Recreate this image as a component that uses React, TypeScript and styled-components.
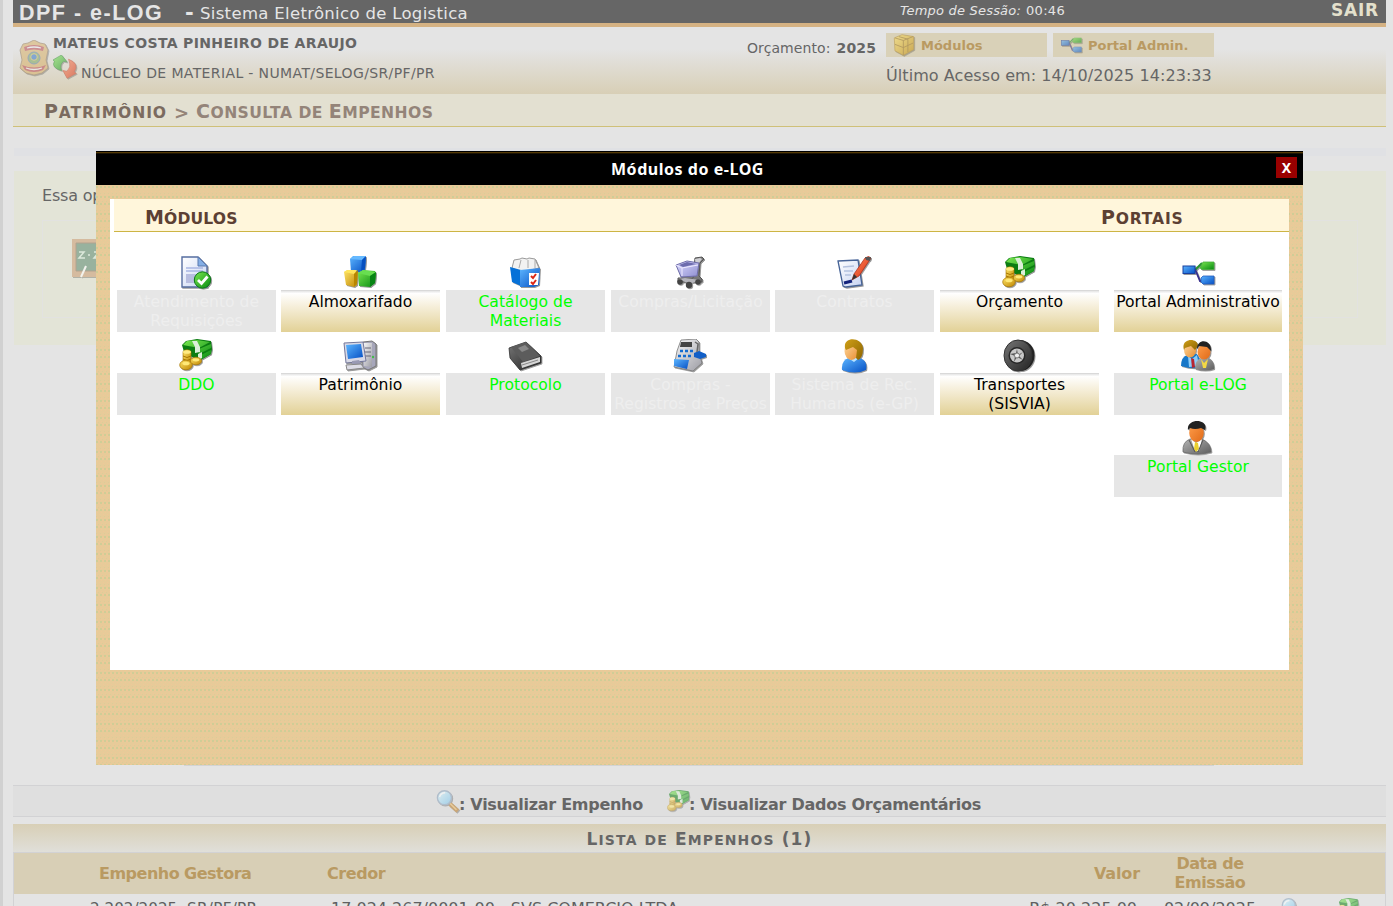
import React from "react";
import styled, { createGlobalStyle } from "styled-components";

const Global = createGlobalStyle`
  * { box-sizing: border-box; }
  body { margin: 0; background: #e4e4e4; overflow: hidden; }
`;

const Screen = styled.div`
  position: relative;
  width: 1393px;
  height: 906px;
  overflow: hidden;
  background: #e4e4e4;
  border-left: 3px solid #d1d1d1;
  padding: 0 7px 0 10px;
  color: #666;
  font: 15.6px/19px "DejaVu Sans", Verdana, sans-serif;
`;

const Text = styled.span<{ $ls?: number; $size?: number; $bold?: boolean; $italic?: boolean; $color?: string }>`
  display: inline-block;
  white-space: nowrap;
  font-size: ${(p) => p.$size ?? 15.6}px;
  letter-spacing: ${(p) => p.$ls ?? 0}px;
  font-weight: ${(p) => (p.$bold ? 700 : 400)};
  font-style: ${(p) => (p.$italic ? "italic" : "normal")};
  color: ${(p) => p.$color ?? "inherit"};
`;

const TopBar = styled.div`
  display: flex;
  align-items: center;
  height: 27px;
  padding: 2px 7px 0 6px;
  background: #666;
  border-bottom: 4px solid #d5b283;
  color: #e5e5e5;
`;
const Brand = styled.span`
  width: 166px;
  font: bold 21.5px/22px "Liberation Sans", Arial, sans-serif;
  letter-spacing: 1.5px;
`;
const Dash = styled.span`
  width: 15px;
  font: bold 21px/18px "DejaVu Sans", sans-serif;
`;
const Product = styled.div`
  width: 700px;
  padding-top: 2px;
`;
const Session = styled.div`
  flex: 1;
  display: flex;
  gap: 5px;
  padding-bottom: 4px;
`;
const Exit = styled.div`
  padding-bottom: 3px;
`;

const Header = styled.div`
  display: flex;
  height: 67px;
  background: linear-gradient(#e4e4e4 0, #e4e4e4 22px, #d8cfb6 100%);
`;
const Crest = styled.div`
  width: 40px;
  padding: 13px 0 0 6px;
`;
const User = styled.div`
  width: 694px;
  padding-top: 7px;
`;
const Unit = styled.div`
  display: flex;
  align-items: flex-start;
  gap: 4px;
  padding-top: 2px;
  span { margin-top: 9px; }
`;
const Budget = styled.div`
  display: flex;
  gap: 6px;
  width: 139px;
  padding-top: 12px;
`;
const Access = styled.div`
  padding-top: 6px;
`;
const Shortcuts = styled.div`
  display: flex;
  gap: 6px;
  margin-bottom: 9px;
`;
const Shortcut = styled.div`
  display: flex;
  align-items: center;
  gap: 6px;
  width: 161px;
  height: 24px;
  padding-left: 7px;
  background: #d9d1b8;
  color: #b99a62;
`;

const CrumbBar = styled.div`
  display: flex;
  align-items: center;
  height: 33px;
  padding: 5px 0 0 31px;
  gap: 7px;
  background: #e3e0d1;
  border-bottom: 1px solid #cfc078;
  color: #7b6b5f;
`;
const Heading = styled.span<{ $size: number; $ls: number; $color?: string; $gap?: number }>`
  display: inline-flex;
  align-items: baseline;
  gap: ${(p) => p.$gap ?? 6}px;
  font-size: ${(p) => p.$size}px;
  letter-spacing: ${(p) => p.$ls}px;
  font-weight: 700;
  color: ${(p) => p.$color ?? "inherit"};
`;
const Word = styled.span<{ $small?: boolean }>`
  display: inline-block;
  font-size: 0.82em;
  text-transform: uppercase;
  &::first-letter { font-size: ${(p) => (p.$small ? "1em" : "1.22em")}; }
`;
function SmallCaps({ text, size, ls, color, gap }: { text: string; size: number; ls: number; color?: string; gap?: number }) {
  return (
    <Heading $size={size} $ls={ls} $color={color} $gap={gap}>
      {text.split(" ").map((w) => (
        <Word key={w} $small={/^[a-z]/.test(w)}>{w}</Word>
      ))}
    </Heading>
  );
}

const FaintBar = styled.div`
  height: 8px;
  margin: 21px 0 15px 1px;
  background: #e0e1e4;
`;
const Notice = styled.div`
  height: 174px;
  margin-left: 1px;
  padding: 15px 28px 0;
  background: #e3e4d7;
`;
const NoticeBox = styled.div`
  height: 98px;
  margin-top: 14px;
  padding: 18px 0 0 29px;
  border: 1px solid #e2e2e0;
`;
const Divider = styled.div`
  height: 1px;
  margin: 420px 172px 19px 171px;
  background: #d3d3d3;
`;
const Legend = styled.div`
  display: flex;
  justify-content: center;
  height: 32px;
  padding: 0 0 0 18px;
  gap: 24px;
  background: #dfdfdf;
  border: solid #d2d2d4;
  border-width: 1px 0;
`;
const LegendItem = styled.div`
  display: flex;
  svg { margin-top: 4px; }
  span { margin-top: 9px; margin-left: -1px; }
`;
const ListTitle = styled.div`
  display: flex;
  justify-content: center;
  height: 28px;
  margin-top: 7px;
  padding-top: 6px;
  background: linear-gradient(#d8cfb6, #e0dfd9);
`;
const Table = styled.div`
  border: 1px solid #d2d2d4;
`;
const Row = styled.div<{ $head?: boolean }>`
  display: grid;
  grid-template-columns: 85px 85px 143px 1fr 120px 140px 83px 22px;
  align-items: center;
  height: ${(p) => (p.$head ? 41 : 30)}px;
  background: ${(p) => (p.$head ? "#d8cfb6" : "transparent")};
  color: ${(p) => (p.$head ? "#b99a62" : "#606060")};
`;
const Cell = styled.div<{ $align?: string; $shift?: number; $end?: number }>`
  text-align: ${(p) => p.$align ?? "left"};
  white-space: nowrap;
  margin-left: ${(p) => p.$shift ?? 0}px;
  padding-right: ${(p) => p.$end ?? 0}px;
`;

const Modal = styled.div`
  position: absolute;
  left: 93px;
  top: 151px;
  width: 1207px;
  height: 614px;
  color: #000;
  background: url("data:image/svg+xml,%3Csvg xmlns='http://www.w3.org/2000/svg' width='4' height='17'%3E%3Crect width='4' height='17' fill='%23e7cb99'/%3E%3Cpath d='M0 1h2v2H0zM0 11h2v2H0z' fill='%23cfcd96'/%3E%3Cpath d='M2 1h2v1H2zM1 4h1v1H1zM3 6h1v1H3zM1 9h1v1H1zM2 12h2v1H2zM1 15h1v1H1z' fill='%23efc898'/%3E%3Cpath d='M0 8h1v1H0zM2 16h1v1H2z' fill='%23dccc98'/%3E%3C/svg%3E");
`;
const TitleBar = styled.div`
  display: grid;
  grid-template-columns: 1fr auto 1fr;
  align-items: center;
  height: 34px;
  padding: 2px 6px 0 0;
  background: linear-gradient(#000 1px, #553a05 1px 2px, #1c1302 2px 3px, #000 3px);
`;
const ModalTitle = styled.h1`
  grid-column: 2;
  margin: 0 18px 0 0;
  font: bold 16px/20px "Noto Sans", Tahoma, sans-serif;
  letter-spacing: 0.54px;
  color: #fff;
`;
const Close = styled.button`
  justify-self: end;
  width: 21px;
  height: 21px;
  margin-top: -3px;
  padding: 0;
  border: 0;
  background: #900;
  color: #fff;
  font: bold 14px/21px "Noto Sans", sans-serif;
`;
const Panel = styled.div`
  width: 1179px;
  height: 471px;
  margin: 14px;
  padding-left: 4px;
  background: #fff;
`;
const PanelHead = styled.div`
  display: flex;
  align-items: center;
  height: 33px;
  padding: 6px 0 0 31px;
  background: #fff6db;
  border-bottom: 1px solid #cdb544;
  color: #5c4033;
`;
const HeadLeft = styled.div`
  width: 956px;
`;
const Body = styled.div`
  display: flex;
  padding: 24px 0 0 3px;
  gap: 15px;
`;
const Modules = styled.div`
  display: grid;
  grid-template-columns: 164px 165px 165px 164px 165px 159px;
  grid-auto-rows: 82.5px;
`;
const Portals = styled.div`
  display: grid;
  grid-template-columns: 168px;
  grid-auto-rows: 82.5px;
`;
const Item = styled.div<{ $w: number }>`
  display: flex;
  flex-direction: column;
  align-items: center;
  width: ${(p) => p.$w}px;
`;
const IconSlot = styled.div`
  height: 34px;
  padding-right: 1px;
`;
type Kind = "active" | "green" | "off";
const Label = styled.div<{ $kind: Kind }>`
  width: 100%;
  height: 42px;
  padding-top: 3px;
  text-align: center;
  white-space: pre;
  letter-spacing: 0.02px;
  background: ${(p) => (p.$kind === "active" ? "linear-gradient(#d9d9d9 0 1px, #eaeaea 1px 2px, #fff 3px, #f6efdb 16px, #e2d196 100%)" : "#e6e6e6")};
  color: ${(p) => ({ active: "#000", green: "#0f0", off: "#eee" })[p.$kind]};
`;

const Svg = styled.svg<{ $s?: number; $fade?: boolean }>`
  display: block;
  flex: none;
  width: ${(p) => p.$s ?? 34}px;
  height: ${(p) => p.$s ?? 34}px;
  opacity: ${(p) => (p.$fade ? 0.55 : 1)};
  filter: drop-shadow(1px 1px 0.6px rgba(0, 0, 0, 0.4));
`;
const Defs = styled.svg`
  position: absolute;
  width: 0;
  height: 0;
`;
const grads: [string, string, string][] = [
  ["blue", "#5cb5ff", "#0650c4"], ["green", "#7be850", "#078a12"], ["gold", "#ffe56a", "#bf8600"],
  ["paper", "#ffffff", "#c6d3f2"], ["dark", "#777", "#222"], ["suit", "#b5b5b5", "#5d5d5d"],
  ["skin", "#ffd9a0", "#e88d30"], ["tan", "#ff9d4a", "#e06a18"], ["hair", "#cf9f18", "#8e6500"],
  ["grey", "#fafafa", "#9c9ca4"], ["lilac", "#dcdcff", "#8f8ed0"], ["lens", "#e0fbff", "#6fc0ee"], ["red", "#ff8a5a", "#d92c10"],
];

const Money = () => (
  <>
    <path d="m3 6 4-4 11-2 14 2 1 8-1 5-12 7L5 13z" fill="#0b7d12" />
    <path d="m4 6 4-4 10-1 13 2-11 6zM20 10l12-5v4l-12 6zM20 17l12-6v4l-11 6z" fill="url(#green)" />
    <path d="m13 2 5 0 3 6v5l-5 1V8zM19 15l4-2v6l-4 2z" fill="#dcefd9" />
    <path d="M4 13c0-3 8-3 8 0v13H4z" fill="url(#gold)" stroke="#a87500" strokeWidth=".6" />
    <ellipse cx="8" cy="13" rx="4" ry="1.800" fill="#ffeb83" />
    <path d="M4 17q4 3 8 0M4 20q4 3 8 0" stroke="#a87500" fill="none" />
    <ellipse cx="7" cy="26" rx="6.300" ry="4.800" fill="url(#gold)" stroke="#a87500" strokeWidth=".7" />
    <ellipse cx="17" cy="22" rx="5.500" ry="3.800" fill="url(#gold)" stroke="#a87500" strokeWidth=".7" />
    <ellipse cx="7" cy="24.500" rx="3.600" ry="1.800" fill="#ffe978" /><ellipse cx="17" cy="21" rx="3.300" ry="1.400" fill="#ffe978" />
  </>
);
const Nodes = () => (
  <>
    <path d="M13 13h2l6-6" fill="none" stroke="#279330" strokeWidth="2" />
    <path d="m14 13 5 12h4" fill="none" stroke="#39308e" strokeWidth="1.800" />
    <rect x="2" y="10" width="12" height="7.500" fill="url(#blue)" stroke="#1840a0" />
    <path d="m22 6h11v7.500H21L19 12z" fill="url(#green)" stroke="#49ad3e" strokeWidth=".8" />
    <path d="M22 20h11v8H22l-2-2v-4z" fill="url(#blue)" stroke="#245dc0" strokeWidth=".8" />
  </>
);
const glyphs: Record<string, React.ReactNode> = {
  doc: (<>
    <path d="M3 1h16l9 9v21H3z" fill="url(#paper)" stroke="#566da0" strokeWidth="1.400" />
    <path d="M19 1v9h9z" fill="#84aee5" stroke="#5878af" />
    <path d="M7 12h17M7 15h17" stroke="#a9b6e4" strokeWidth="1.500" /><path d="M7 18h10v9H7z" fill="#b8bee0" />
    <circle cx="23.500" cy="24" r="8.200" fill="url(#green)" stroke="#087616" />
    <path d="m19 24 3.500 3.500 6-7" fill="none" stroke="#fff" strokeWidth="2.800" />
  </>),
  cubes: (<>
    <path d="M7 3 10 0h12l1 3-1 11-4 2H8z" fill="url(#blue)" /><path d="m7 3 4-3h12l-4 4z" fill="#66b9ff" /><path d="m19 4 4-4-1 12-4 4z" fill="#054fc0" />
    <path d="m1 16 3-2h8l3 3-1 12-3 2-8-2z" fill="url(#gold)" /><path d="m1 16 4-2h9l-3 4z" fill="#ffe65c" /><path d="m11 18 4-4-1 13-3 4z" fill="#b78600" />
    <path d="m15 17 5-3 12 1 1 3-1 9-5 4-11-1z" fill="url(#green)" /><path d="m15 17 5-3 13 2-6 4z" fill="#68de50" /><path d="m27 20 6-4-1 11-5 4z" fill="#078414" />
  </>),
  catalog: (<>
    <path d="m4 12 2-8 6-1 2-1 5 1 2-1 6 1 4 9-17 4z" fill="#f2f2f2" stroke="#999" />
    <path d="m13 4-2 8m9-8v8m7-8v8" stroke="#aaa" /><path d="m2 11 11 3v16L4 26z" fill="#0671d8" /><path d="m12 14 20-2-1 17-5 2H12z" fill="url(#blue)" />
    <path d="M21 17h10l-1 12h-9z" fill="#fff" /><path d="m23 20 2 2 3-4m-5 8 2 2 3-4" fill="none" stroke="#dd2715" strokeWidth="2" />
  </>),
  cart: (<>
    <path d="m22 2 7-1 2 2-4 4-1 13 3 3v3H5v-4h15z" fill="#777" stroke="#555" /><path d="m22 3 5-1 2 1-3 4-2 14z" fill="#d0d0d4" />
    <path d="m3 9 11-4 12 2-2 13-16 1z" fill="url(#lilac)" stroke="#6e6ca8" /><path d="m3 9 6 3 16-3M9 12v8" stroke="#eeeaff" fill="none" /><path d="m6 9 8-3 9 2-13 3z" fill="#6d6cad" />
    <path d="m5 23 7-1 15 2-10 4z" fill="#b5b5bb" /><circle cx="7" cy="26" r="2.800" fill="#444" /><circle cx="16" cy="29" r="3.200" fill="#444" /><circle cx="25" cy="26" r="2.800" fill="#444" />
  </>),
  contract: (<>
    <path d="m1 5 20-1 4 25-16 2-3-1z" fill="url(#paper)" stroke="#466397" strokeWidth="1.300" />
    <path d="m6 11 11-1M7 15h9M8 19h6" stroke="#b4c2df" strokeWidth="1.500" /><path d="m7 27 8-2" stroke="#13237c" strokeWidth="3" />
    <path d="m15 24 2-6L28 2q4-3 6 0L22 20z" fill="url(#red)" stroke="#a72612" strokeWidth=".7" /><path d="m17 18-2 6 5-3z" fill="#333" /><path d="m28 1 6 0-1 4-4-1z" fill="#555" />
  </>),
  money: <Money />,
  nodes: <Nodes />,
  computer: (<>
    <path d="m20 3 9-1 4 3v22l-8 4-6-3z" fill="#a6a6ba" stroke="#777" /><path d="m20 4 9 0v24l-8-1z" fill="url(#grey)" /><path d="M22 9h6m-6 4h6m-6 4h6" stroke="#667" /><circle cx="30" cy="18" r="1.200" fill="#43bb48" />
    <path d="m1 4 19-1 3 19-20 2z" fill="#d8d9e6" stroke="#73779a" /><path d="m3 6 15-1 2 13-15 2z" fill="url(#blue)" /><path d="m9 22 7-1 3 5-10 1z" fill="#999ab4" /><path d="m3 26 15-1 3 4-17 2z" fill="#dddde7" stroke="#888" />
  </>),
  book: (<>
    <path d="m1 9 17-6 15 14v7L12 31 2 19z" fill="url(#dark)" stroke="#333" strokeWidth=".8" /><path d="m3 8 15-5 14 14-17 6z" fill="#5c5c5c" /><path d="m13 24 19-6v5l-18 6z" fill="#d6d6d6" /><path d="m14 26 16-5" stroke="#888" /><path d="m10 9 7-3 4 4-7 3z" fill="#888" />
  </>),
  register: (<>
    <path d="m8 1 15-1 3 3v11l3 10-9 8L1 28l3-16z" fill="url(#grey)" stroke="#777" strokeWidth=".8" /><path d="m8 3 11 0v5H7z" fill="#444" />
    <path d="M7 12h3m2 0h3m2 0h3M5 17h3m2 0h3m2 0h3" stroke="#126bd1" strokeWidth="2.600" /><path d="m1 20 15 1-2 9-13-3z" fill="url(#blue)" />
    <path d="m21 14 5-2 7 3v3l-6 2-6-2z" fill="#125fc7" /><path d="m22 3 3 2-1 8" fill="none" stroke="#666" strokeWidth="1.500" />
  </>),
  person: (<>
    <path d="M5 31q-1-10 7-12h11q8 3 6 12-11 5-24 0z" fill="url(#blue)" /><path d="m11 19 6 4 5-4-2-3h-7z" fill="#b9e4ff" /><ellipse cx="14.500" cy="12" rx="7" ry="9" fill="url(#skin)" /><path d="M8 9C6-3 25-2 26 9q0 10-5 12l-2-2 1-8-4-3-7 3z" fill="url(#hair)" />
  </>),
  wheel: (<>
    <ellipse cx="18" cy="16.500" rx="14.500" ry="15.500" fill="#222" /><ellipse cx="16" cy="16.500" rx="14" ry="15.500" fill="url(#dark)" stroke="#333" />
    <circle cx="15" cy="16.500" r="8.500" fill="#282828" /><circle cx="15" cy="16.500" r="7" fill="#c8c8c8" /><path d="m15 10 1 6 5-3-4 4 4 4-6-3-3 5 1-6-5-2 6-1z" fill="#555" /><circle cx="15" cy="16.500" r="2.500" fill="#eee" stroke="#777" />
  </>),
  pair: (<>
    <path d="M0 27q0-9 6-11l10-1 7 13q-11 3-23-1z" fill="#1777c8" /><path d="m7 17 4 3 5-4 2 11-10 1z" fill="#8fcdf6" /><path d="m10 19 3 1 1 8-3 1z" fill="#b72532" /><ellipse cx="9" cy="11" rx="6" ry="7.500" fill="url(#skin)" /><path d="M3 11C-1-1 17-2 17 7l-3 4-4-4-6 2z" fill="url(#hair)" />
    <path d="M14 30q0-9 6-11h8q6 4 5 11-9 3-19 0z" fill="url(#suit)" /><path d="m20 20 3 4 4-4-2 9h-3z" fill="#f3d845" /><ellipse cx="23" cy="13" rx="6.500" ry="7.500" fill="url(#tan)" /><path d="M16 10C16-1 31 0 30 12l-4-4-8-1z" fill="#222" />
  </>),
  manager: (<>
    <path d="M2 31q-1-10 7-13h12q9 4 9 13-13 4-28 0z" fill="url(#suit)" stroke="#666" strokeWidth=".7" /><path d="m10 18 5 4 6-4-3 12h-4z" fill="#fff" /><path d="m14 21 3 1 1 6-3 3-2-3z" fill="#ead02f" /><path d="m8 19 6 12M22 19l-5 12" stroke="#555" /><ellipse cx="15.500" cy="12" rx="7.300" ry="9" fill="url(#tan)" /><path d="M7 9C5-3 28-3 24 9l-4-2q-6 2-11 0z" fill="#222" />
  </>),
  lens: (<>
    <path d="m20 20 11 10" stroke="#b87924" strokeWidth="6" /><path d="m20 19 9 9" stroke="#f2bd67" strokeWidth="2" /><circle cx="12" cy="11" r="10" fill="url(#lens)" stroke="#8ba2bb" strokeWidth="2" /><path d="M5 10q2-6 8-6" stroke="#fff" strokeWidth="2" fill="none" />
  </>),
  box: (<>
    <path d="m2 6 12-5 18 3v20l-16 9-13-7z" fill="url(#gold)" stroke="#a77b15" /><path d="m3 6 13 4 15-6M16 10v23M9 4l14 4v20M3 16l13 5 15-7" fill="none" stroke="#936b19" strokeWidth="1.300" />
  </>),
  refresh: (<>
    <path d="M12 22Q-3 18 2 9L0 7 12 0l8 10-5-1q-6 4-3 13z" fill="url(#green)" stroke="#188021" /><path d="M22 6q16 6 8 18l3 2-13 7-6-11 5 1q8-5 3-17z" fill="url(#red)" stroke="#c03a22" />
  </>),
  crest: (<>
    <path d="m3 4 5-1 6-3 6 3 5 1 3 6-2 10 2 8-6 5-8 2-8-2-6-5 2-8-2-10z" fill="#d8b068" stroke="#8b7152" strokeWidth=".8" /><path d="M4 7q10-4 20 0l-1 4q-9-3-18 0zM2 25q12 5 24 0l-3 5q-9 4-18 0z" fill="#b84850" /><path d="M7 8q7-2 14 0M6 28q8 3 16 0" stroke="#eee" fill="none" strokeWidth="1.300" /><circle cx="14" cy="18" r="6" fill="#7ba65e" stroke="#5d7da2" strokeWidth="1" /><circle cx="14" cy="17" r="3.300" fill="#3678c8" stroke="#d8c15b" />
  </>),
  board: (<>
    <path d="M0 0h40v38H0z" fill="#cb9a72" /><path d="M4 4h34v28H4z" fill="#5b8a70" stroke="#8b6f55" /><path d="M7 13h5l-5 6h6M16 16h2M22 13h5l-5 6h6" fill="none" stroke="#d8eedf" strokeWidth="1.500" /><path d="m9 38 5-11" stroke="#fff" strokeWidth="2" />
  </>),
};
function Icon({ name, size, fade, box = 34 }: { name: string; size?: number; fade?: boolean; box?: number }) {
  return <Svg $s={size} $fade={fade} viewBox={`0 0 ${box} ${box}`}>{glyphs[name]}</Svg>;
}

type Entry = [string, string, Kind];
const modules: Entry[] = [
  ["doc", "Atendimento de\nRequisições", "off"], ["cubes", "Almoxarifado", "active"], ["catalog", "Catálogo de\nMateriais", "green"],
  ["cart", "Compras/Licitação", "off"], ["contract", "Contratos", "off"], ["money", "Orçamento", "active"],
  ["money", "DDO", "green"], ["computer", "Patrimônio", "active"], ["book", "Protocolo", "green"],
  ["register", "Compras -\nRegistros de Preços", "off"], ["person", "Sistema de Rec.\nHumanos (e-GP)", "off"], ["wheel", "Transportes\n(SISVIA)", "active"],
];
const portals: Entry[] = [
  ["nodes", "Portal Administrativo", "active"], ["pair", "Portal e-LOG", "green"], ["manager", "Portal Gestor", "green"],
];
function Tile({ entry: [icon, label, kind], width }: { entry: Entry; width: number }) {
  return (
    <Item $w={width}>
      <IconSlot><Icon name={icon} /></IconSlot>
      <Label $kind={kind}>{label}</Label>
    </Item>
  );
}

export default function App() {
  return (
    <Screen>
      <Global />
      <Defs>
        <defs>
          {grads.map(([id, a, b]) => (
            <linearGradient key={id} id={id} x1="0" y1="0" x2="1" y2="1">
              <stop offset="0" stopColor={a} /><stop offset="1" stopColor={b} />
            </linearGradient>
          ))}
        </defs>
      </Defs>
      <TopBar>
        <Brand>DPF - e-LOG</Brand>
        <Dash>-</Dash>
        <Product><Text $size={16.5} $ls={0.32}>Sistema Eletrônico de Logistica</Text></Product>
        <Session>
          <Text $size={13} $ls={0.2} $italic>Tempo de Sessão:</Text>
          <Text $size={13} $ls={0.3}>00:46</Text>
        </Session>
        <Exit><Text $size={17} $ls={0.8} $bold $color="#e3e0cc">SAIR</Text></Exit>
      </TopBar>
      <Header>
        <Crest><Svg $s={36} $fade viewBox="-1 0 36 36">{glyphs.crest}</Svg></Crest>
        <User>
          <Text $size={14} $ls={0.35} $bold>MATEUS COSTA PINHEIRO DE ARAUJO</Text>
          <Unit><Icon name="refresh" size={24} fade /><Text $size={14} $ls={0.37}>NÚCLEO DE MATERIAL - NUMAT/SELOG/SR/PF/PR</Text></Unit>
        </User>
        <Budget><Text $size={14} $ls={0.08}>Orçamento:</Text><Text $size={14} $ls={0.2} $bold>2025</Text></Budget>
        <Access>
          <Shortcuts>
            <Shortcut><Icon name="box" size={22} fade /><Text $size={13} $bold>Módulos</Text></Shortcut>
            <Shortcut><Icon name="nodes" size={22} fade /><Text $size={13} $bold>Portal Admin.</Text></Shortcut>
          </Shortcuts>
          <Text $size={16} $ls={0.07}>Último Acesso em: 14/10/2025 14:23:33</Text>
        </Access>
      </Header>
      <CrumbBar>
        <SmallCaps text="Patrimônio" size={19} ls={0.9} />
        <Text $size={18} $bold $color="#948479">&gt;</Text>
        <SmallCaps text="Consulta de Empenhos" size={19} ls={0.42} color="#948479" />
      </CrumbBar>
      <FaintBar />
      <Notice>
        <Text $size={16} $ls={-0.2}>Essa opção</Text>
        <NoticeBox><Icon name="board" size={40} box={40} fade /></NoticeBox>
      </Notice>
      <Divider />
      <Legend>
        <LegendItem><Icon name="lens" size={24} fade /><Text $size={16} $ls={-0.27} $bold>: Visualizar Empenho</Text></LegendItem>
        <LegendItem><Icon name="money" size={23} fade /><Text $size={16} $ls={-0.26} $bold>: Visualizar Dados Orçamentários</Text></LegendItem>
      </Legend>
      <ListTitle><SmallCaps text="Lista de Empenhos (1)" size={17} ls={1.15} gap={7} /></ListTitle>
      <Table>
        <Row $head>
          <Cell /><Cell><Text $size={16} $ls={-0.5} $bold>Empenho</Text></Cell>
          <Cell><Text $size={16} $ls={-0.5} $bold>Gestora</Text></Cell>
          <Cell><Text $size={16} $ls={-0.45} $bold>Credor</Text></Cell>
          <Cell $align="right"><Text $size={16} $ls={-0.13} $bold>Valor</Text></Cell>
          <Cell $align="center"><Text $size={16} $ls={-0.45} $bold>Data de<br />Emissão</Text></Cell>
        </Row>
        <Row>
          <Cell /><Cell $shift={-9}><Text $size={15.2}>2.202/2025</Text></Cell>
          <Cell $shift={3}><Text $size={15.2} $ls={0.3}>SR/PF/PR</Text></Cell>
          <Cell $shift={4}><Text $size={16}>17.024.267/0001-00 - SVS COMERCIO LTDA</Text></Cell>
          <Cell $align="right" $end={3}><Text $size={16}>R$ 20.225,00</Text></Cell>
          <Cell $align="center"><Text $size={16}>02/09/2025</Text></Cell>
          <Cell $shift={1}><Icon name="lens" size={22} fade /></Cell>
          <Cell $shift={-26}><Icon name="money" size={22} fade /></Cell>
        </Row>
      </Table>
      <Modal>
        <TitleBar>
          <ModalTitle>Módulos do e-LOG</ModalTitle>
          <Close>X</Close>
        </TitleBar>
        <Panel>
          <PanelHead>
            <HeadLeft><SmallCaps text="Módulos" size={19} ls={0.15} /></HeadLeft>
            <SmallCaps text="Portais" size={19} ls={0.8} />
          </PanelHead>
          <Body>
            <Modules>{modules.map((m) => <Tile key={m[1]} entry={m} width={159} />)}</Modules>
            <Portals>{portals.map((m) => <Tile key={m[1]} entry={m} width={168} />)}</Portals>
          </Body>
        </Panel>
      </Modal>
    </Screen>
  );
}
